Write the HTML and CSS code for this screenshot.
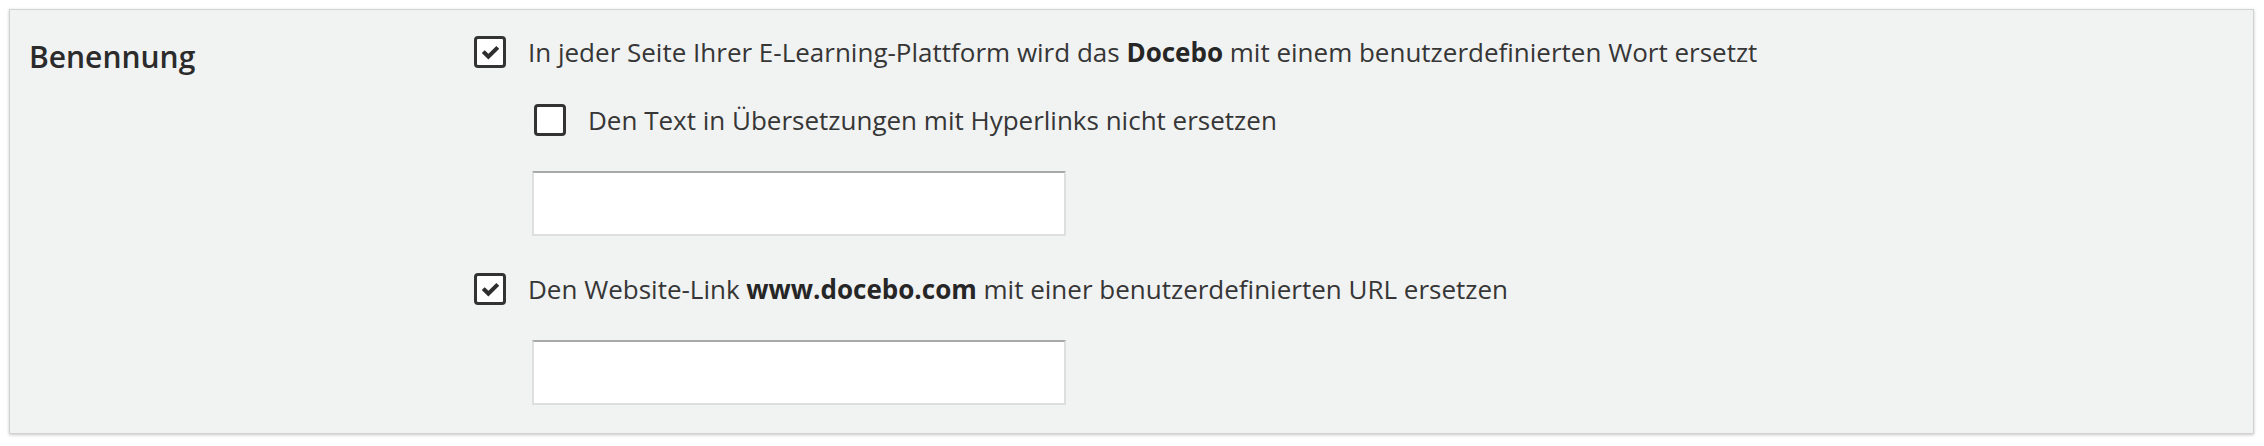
FILE: index.html
```html
<!DOCTYPE html>
<html lang="de">
<head>
<meta charset="utf-8">
<title>Benennung</title>
<link rel="stylesheet" href="styles.css">
</head>
<body>
<div class="panel">
  <div class="label">Benennung</div>
  <div class="options">
    <label class="option">
      <span class="cb checked"><svg viewBox="0 0 16 16" width="17" height="17"><polyline points="2.5,8.5 6,12 13.5,4.5" fill="none" stroke="#2e2e2e" stroke-width="3.8" stroke-linecap="square"/></svg></span>
      <span class="text">In jeder Seite Ihrer E-Learning-Plattform wird das <b>Docebo</b> mit einem benutzerdefinierten Wort ersetzt</span>
    </label>
    <label class="option sub">
      <span class="cb"></span>
      <span class="text">Den Text in Übersetzungen mit Hyperlinks nicht ersetzen</span>
    </label>
    <div class="field"></div>
    <label class="option">
      <span class="cb checked"><svg viewBox="0 0 16 16" width="17" height="17"><polyline points="2.5,8.5 6,12 13.5,4.5" fill="none" stroke="#2e2e2e" stroke-width="3.8" stroke-linecap="square"/></svg></span>
      <span class="text">Den Website-Link <b>www.docebo.com</b> mit einer benutzerdefinierten URL ersetzen</span>
    </label>
    <div class="field"></div>
  </div>
</div>
</body>
</html>
```
FILE: styles.css
```css
html, body {
  margin: 0;
  padding: 0;
  background: #ffffff;
}
body {
  padding: 9px 10px 10px 9px;
  font-family: "Open Sans", "Liberation Sans", sans-serif;
  color: #333333;
}
.panel {
  display: grid;
  grid-template-columns: 445px 1fr;
  background: #f1f2f2;
  border: 1px solid #d2d2d2;
  box-shadow: 0 1px 3px rgba(0, 0, 0, 0.22);
  padding: 26px 20px 28px 19px;
}
.label {
  font-size: 30px;
  font-weight: 600;
  line-height: 35px;
  color: #2b2b2b;
  margin-top: 3px;
}
.options {
  display: flex;
  flex-direction: column;
  align-items: flex-start;
}
.option {
  display: flex;
  align-items: center;
  gap: 22px;
  height: 32px;
}
.option.sub {
  margin-left: 60px;
  margin-top: 36px;
}
.cb {
  box-sizing: border-box;
  width: 32px;
  height: 32px;
  border: 3px solid #333333;
  border-radius: 4px;
  background: #ffffff;
  display: flex;
  align-items: center;
  justify-content: center;
  flex: none;
}
.cb svg {
  display: block;
}
.text {
  font-size: 26px;
  line-height: 32px;
  color: #363636;
  white-space: nowrap;
}
.text b {
  font-weight: 700;
  color: #262626;
}
.field {
  box-sizing: border-box;
  width: 534px;
  height: 65px;
  margin-left: 58px;
  margin-top: 35px;
  background: #ffffff;
  border: 2px solid #dedede;
  border-top-color: #a9a9a9;
}
.field + .option {
  margin-top: 37px;
}
```
